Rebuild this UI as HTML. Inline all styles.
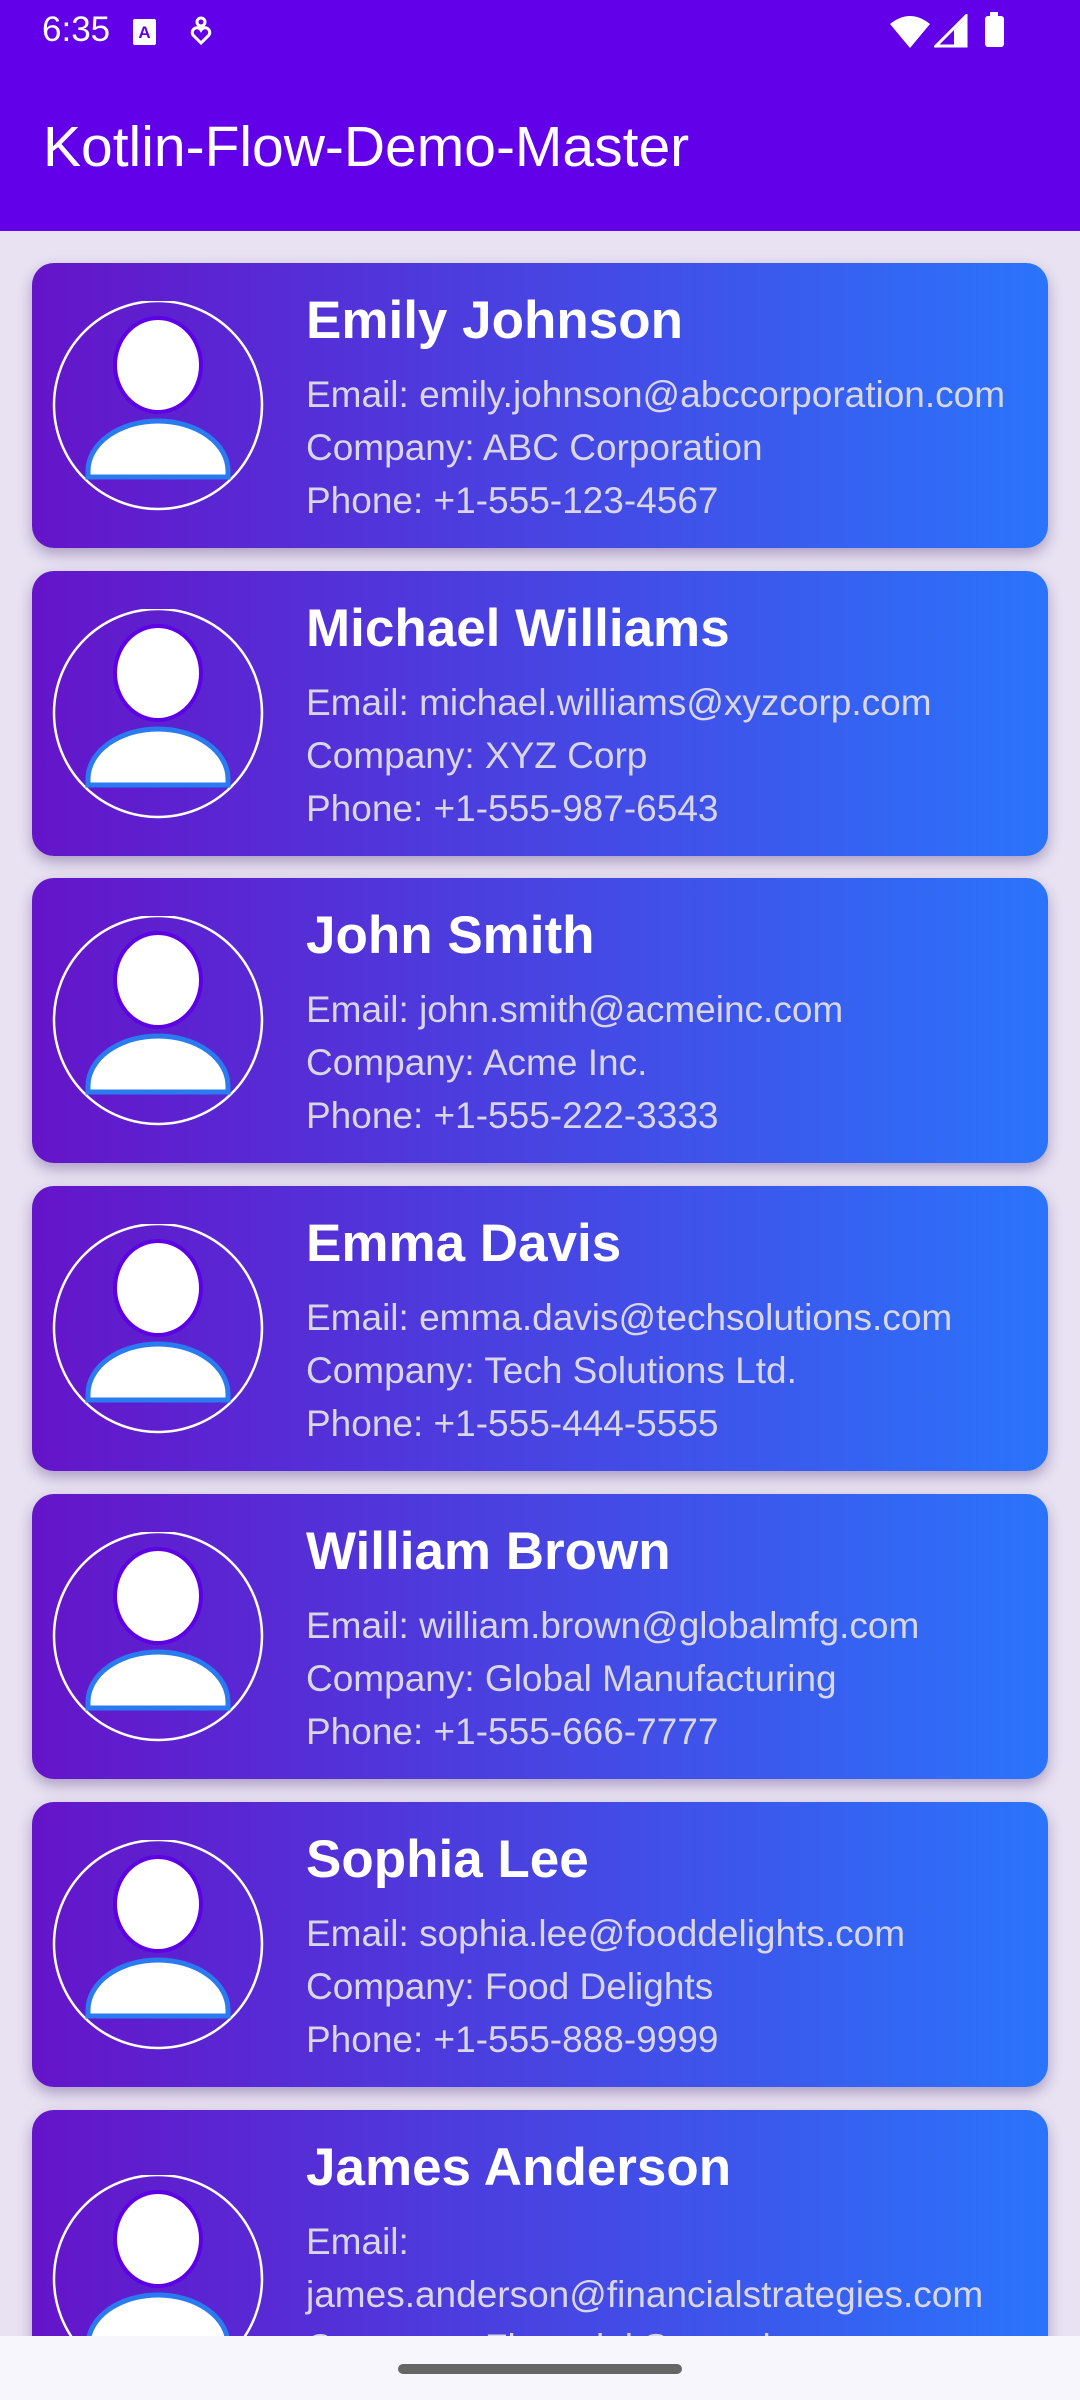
<!DOCTYPE html>
<html><head><meta charset="utf-8"><style>
*{margin:0;padding:0;box-sizing:border-box}
html,body{width:1080px;height:2400px;overflow:hidden}
body{font-family:"Liberation Sans",sans-serif}
#wrap{position:relative;width:1080px;height:2400px;overflow:hidden;background:#e8e2f2}
.top{position:absolute;left:0;top:0;width:1080px;height:231px;background:#6200ea;color:#fff}
.time{position:absolute;left:42px;top:10px;font-size:35px}
.title{position:absolute;left:43px;top:112px;font-size:57px;line-height:70px}
.card{position:absolute;left:32px;width:1016px;height:285px;border-radius:22px;background:linear-gradient(90deg,#6514c9,#2a74fb);box-shadow:0 6px 14px rgba(60,30,110,.35);overflow:hidden}
.av{position:absolute;left:20px;top:38px}
.name{position:absolute;left:274px;top:23px;font-size:53px;font-weight:bold;color:#fff;line-height:70px}
.info{position:absolute;left:274px;top:105px;font-size:37px;line-height:53px;color:#d9d6e6;white-space:nowrap}
.nav{position:absolute;left:0;top:2336px;width:1080px;height:64px;background:#f7f6fc}
.handle{position:absolute;left:398px;top:28px;width:284px;height:10px;border-radius:5px;background:#666}
</style></head><body><div id="wrap">
<div class="top">
<div class="time">6:35</div>
<svg style="position:absolute;left:132px;top:18px" width="26" height="28"><rect x="1" y="1" width="23" height="26" rx="2" fill="#fff"/><text x="12.5" y="20" font-size="17" font-family="Liberation Sans" font-weight="bold" text-anchor="middle" fill="#6200ea">A</text></svg>
<svg style="position:absolute;left:188px;top:16px" width="26" height="30" fill="none" stroke="#fff" stroke-width="3"><circle cx="13" cy="6" r="4"/><path d="M13 27 L5 19 A4.5 4.5 0 0 1 13 14 A4.5 4.5 0 0 1 21 19 Z"/></svg>
<svg style="position:absolute;left:888px;top:14px" width="44" height="36"><path d="M2 10 Q22 -6 42 10 L22 34 Z" fill="#fff"/></svg>
<svg style="position:absolute;left:934px;top:14px" width="34" height="34"><path d="M32 2 L32 32 L2 32 Z" fill="none" stroke="#fff" stroke-width="3"/><path d="M20 16 L32 4 L32 32 L20 32Z" fill="#fff"/></svg>
<svg style="position:absolute;left:984px;top:12px" width="22" height="36"><rect x="6" y="0" width="8" height="5" fill="#fff"/><rect x="1" y="4" width="19" height="31" rx="3" fill="#fff"/></svg>
<div class="title">Kotlin-Flow-Demo-Master</div>
</div>

<div class="card" style="top:263px"><svg class="av" width="212" height="212"><circle cx="106" cy="104" r="104" fill="none" stroke="#fff" stroke-width="2.5"/><ellipse cx="106" cy="64" rx="43" ry="47" fill="#fff" stroke="#5d00e6" stroke-width="4"/><path d="M36 176 L36 170 A70 50 0 0 1 176 170 L176 176 Z" fill="#fff" stroke="#2a7af0" stroke-width="5"/></svg><div class="name">Emily Johnson</div><div class="info">Email: emily.johnson@abccorporation.com<br>Company: ABC Corporation<br>Phone: +1-555-123-4567</div></div>

<div class="card" style="top:571px"><svg class="av" width="212" height="212"><circle cx="106" cy="104" r="104" fill="none" stroke="#fff" stroke-width="2.5"/><ellipse cx="106" cy="64" rx="43" ry="47" fill="#fff" stroke="#5d00e6" stroke-width="4"/><path d="M36 176 L36 170 A70 50 0 0 1 176 170 L176 176 Z" fill="#fff" stroke="#2a7af0" stroke-width="5"/></svg><div class="name">Michael Williams</div><div class="info">Email: michael.williams@xyzcorp.com<br>Company: XYZ Corp<br>Phone: +1-555-987-6543</div></div>

<div class="card" style="top:878px"><svg class="av" width="212" height="212"><circle cx="106" cy="104" r="104" fill="none" stroke="#fff" stroke-width="2.5"/><ellipse cx="106" cy="64" rx="43" ry="47" fill="#fff" stroke="#5d00e6" stroke-width="4"/><path d="M36 176 L36 170 A70 50 0 0 1 176 170 L176 176 Z" fill="#fff" stroke="#2a7af0" stroke-width="5"/></svg><div class="name">John Smith</div><div class="info">Email: john.smith@acmeinc.com<br>Company: Acme Inc.<br>Phone: +1-555-222-3333</div></div>

<div class="card" style="top:1186px"><svg class="av" width="212" height="212"><circle cx="106" cy="104" r="104" fill="none" stroke="#fff" stroke-width="2.5"/><ellipse cx="106" cy="64" rx="43" ry="47" fill="#fff" stroke="#5d00e6" stroke-width="4"/><path d="M36 176 L36 170 A70 50 0 0 1 176 170 L176 176 Z" fill="#fff" stroke="#2a7af0" stroke-width="5"/></svg><div class="name">Emma Davis</div><div class="info">Email: emma.davis@techsolutions.com<br>Company: Tech Solutions Ltd.<br>Phone: +1-555-444-5555</div></div>

<div class="card" style="top:1494px"><svg class="av" width="212" height="212"><circle cx="106" cy="104" r="104" fill="none" stroke="#fff" stroke-width="2.5"/><ellipse cx="106" cy="64" rx="43" ry="47" fill="#fff" stroke="#5d00e6" stroke-width="4"/><path d="M36 176 L36 170 A70 50 0 0 1 176 170 L176 176 Z" fill="#fff" stroke="#2a7af0" stroke-width="5"/></svg><div class="name">William Brown</div><div class="info">Email: william.brown@globalmfg.com<br>Company: Global Manufacturing<br>Phone: +1-555-666-7777</div></div>

<div class="card" style="top:1802px"><svg class="av" width="212" height="212"><circle cx="106" cy="104" r="104" fill="none" stroke="#fff" stroke-width="2.5"/><ellipse cx="106" cy="64" rx="43" ry="47" fill="#fff" stroke="#5d00e6" stroke-width="4"/><path d="M36 176 L36 170 A70 50 0 0 1 176 170 L176 176 Z" fill="#fff" stroke="#2a7af0" stroke-width="5"/></svg><div class="name">Sophia Lee</div><div class="info">Email: sophia.lee@fooddelights.com<br>Company: Food Delights<br>Phone: +1-555-888-9999</div></div>

<div class="card" style="top:2110px;height:340px"><svg class="av" style="top:65px" width="212" height="212"><circle cx="106" cy="104" r="104" fill="none" stroke="#fff" stroke-width="2.5"/><ellipse cx="106" cy="64" rx="43" ry="47" fill="#fff" stroke="#5d00e6" stroke-width="4"/><path d="M36 176 L36 170 A70 50 0 0 1 176 170 L176 176 Z" fill="#fff" stroke="#2a7af0" stroke-width="5"/></svg><div class="name">James Anderson</div><div class="info">Email:<br>james.anderson@financialstrategies.com<br>Company: Financial Strategies</div></div>

<div class="nav"><div class="handle"></div></div>
</div></body></html>
